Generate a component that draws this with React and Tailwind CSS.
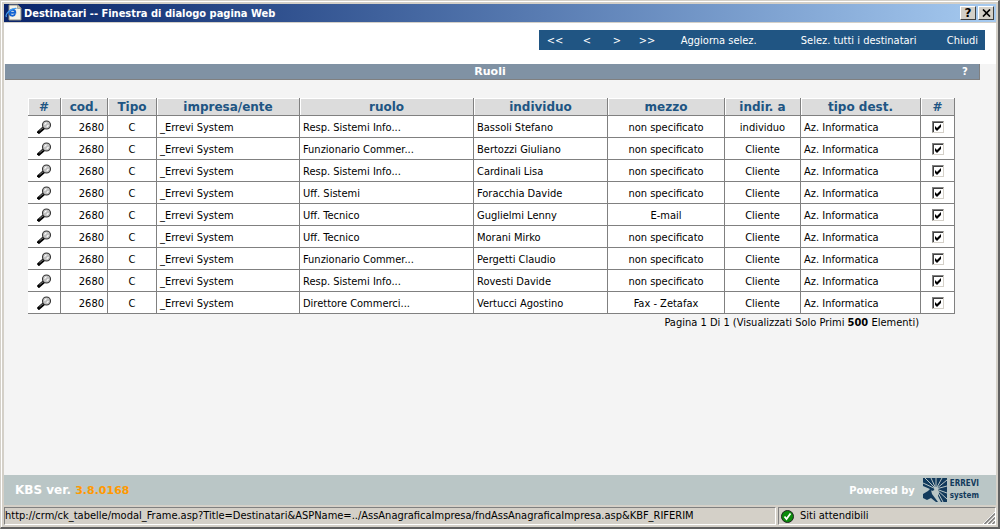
import React, { useState } from 'react';

const columns = [
  { label: '#', width: 33 },
  { label: 'cod.', width: 47 },
  { label: 'Tipo', width: 49 },
  { label: 'impresa/ente', width: 143 },
  { label: 'ruolo', width: 174 },
  { label: 'individuo', width: 134 },
  { label: 'mezzo', width: 117 },
  { label: 'indir. a', width: 76 },
  { label: 'tipo dest.', width: 120 },
  { label: '#', width: 34 },
];

const initialRows = [
  { ruolo: 'Resp. Sistemi Info...', individuo: 'Bassoli Stefano', mezzo: 'non specificato', indirizzo: 'individuo' },
  { ruolo: 'Funzionario Commer...', individuo: 'Bertozzi Giuliano', mezzo: 'non specificato', indirizzo: 'Cliente' },
  { ruolo: 'Resp. Sistemi Info...', individuo: 'Cardinali Lisa', mezzo: 'non specificato', indirizzo: 'Cliente' },
  { ruolo: 'Uff. Sistemi', individuo: 'Foracchia Davide', mezzo: 'non specificato', indirizzo: 'Cliente' },
  { ruolo: 'Uff. Tecnico', individuo: 'Guglielmi Lenny', mezzo: 'E-mail', indirizzo: 'Cliente' },
  { ruolo: 'Uff. Tecnico', individuo: 'Morani Mirko', mezzo: 'non specificato', indirizzo: 'Cliente' },
  { ruolo: 'Funzionario Commer...', individuo: 'Pergetti Claudio', mezzo: 'non specificato', indirizzo: 'Cliente' },
  { ruolo: 'Resp. Sistemi Info...', individuo: 'Rovesti Davide', mezzo: 'non specificato', indirizzo: 'Cliente' },
  { ruolo: 'Direttore Commerci...', individuo: 'Vertucci Agostino', mezzo: 'Fax - Zetafax', indirizzo: 'Cliente' },
];

function PageIcon() {
  return (
    <svg width="18" height="18" viewBox="0 0 18 18" aria-hidden="true">
      <path d="M4 1h9l3 3v12H4z" fill="#f4f2e8" stroke="#8b8b80" />
      <path d="M12.500 1v3.500H16z" fill="#c9c6ba" stroke="#8b8b80" strokeWidth=".6" />
      <path d="M5 8.700h5.300c.3-3.800-5.600-4-5.600.2 0 3.400 4.300 3.500 5.400 1.200" fill="none" stroke="#1263d2" strokeWidth="1.900" />
      <path d="M1.500 13C-.5 10 6 4 11.500 4.500" fill="none" stroke="#3f9bf0" strokeWidth="1.200" />
    </svg>
  );
}

function Magnifier() {
  return (
    <svg width="15" height="14" viewBox="0 0 15 14" aria-hidden="true">
      <path d="M2 12L6.500 8" stroke="#000" strokeWidth="3.200" strokeLinecap="square" />
      <path d="M2.500 10.800L6 7.800" stroke="#aaa" strokeWidth=".8" />
      <circle cx="9.500" cy="5" r="4" fill="#c0c0c0" stroke="#333" strokeWidth="1.100" />
      <path d="M7.500 4.700l2-2M9.800 6.800l1.700-1.700" stroke="#fff" strokeWidth="1.200" />
    </svg>
  );
}

function ErreviMark() {
  return (
    <svg width="25" height="25" viewBox="0 0 25 25" aria-hidden="true">
      <path d="M0 0h24v24H0z" fill="#123a5c" />
      <path
        d="M13 11L2 0M13 11L8 0M13 11V0M13 11L19 0M13 11L24 2M13 11L24 8M13 11l11 4M13 11l11 10M13 11l7 13M13 11L0 5"
        stroke="#bac6c6"
        strokeWidth="1"
      />
      <path d="M0 8l7 3-2 2-5 3zM9 13l5-2 2 3-1 4 3 6h-3l-3-4-3-4-1-4zM0 20l4 2 4-2 5 4H0z" fill="#bac6c6" />
      <circle cx="13" cy="11" r="2" fill="#bac6c6" />
    </svg>
  );
}

function RowCheckbox({ label, checked, onChange }) {
  return (
    <label className="mx-auto grid size-3 place-items-center">
      <input
        type="checkbox"
        aria-label={label}
        checked={checked}
        onChange={onChange}
        className="peer col-start-1 row-start-1 size-3 appearance-none border border-t-[#808080] border-r-[#d4d0c8] border-b-[#d4d0c8] border-l-[#808080] bg-white shadow-[inset_1px_1px_0_#404040]"
      />
      <svg
        width="8"
        height="8"
        viewBox="0 0 8 8"
        aria-hidden="true"
        className="pointer-events-none invisible col-start-1 row-start-1 peer-checked:visible"
      >
        <path d="M1 3l2 2 4-4v3L3 8 1 6z" fill="#000" />
      </svg>
    </label>
  );
}

function TitleButton({ label, children }) {
  return (
    <button
      aria-label={label}
      className="grid h-3.5 w-4 place-items-center border border-t-white border-r-[#404040] border-b-[#404040] border-l-white bg-[#d4d0c8] text-black"
    >
      {children}
    </button>
  );
}

function App() {
  const [selected, setSelected] = useState(initialRows.map(() => true));

  const toggleRow = (index) => {
    setSelected(selected.map((value, i) => (i === index ? !value : value)));
  };

  const cell = 'h-[22px] border-r border-b border-[#808080] bg-white px-[3px]';
  const textCell = `${cell} pt-0.5`;

  return (
    <div className="flex min-h-screen flex-col border-t border-r-2 border-b-2 border-l border-t-[#d4d0c8] border-r-[#606060] border-b-[#606060] border-l-[#d4d0c8] bg-[#d4d0c8] font-['DejaVu_Sans_Condensed','DejaVu_Sans',sans-serif] text-[11px] leading-4 text-black">
      <div className="flex grow flex-col border-t border-l border-white pt-0.5 pr-0.5 pl-0.5">
        {/* Title bar */}
        <header className="flex h-[18px] items-center bg-linear-to-r from-[#0a246a] to-[#a6caf0] pr-0.5 pl-px text-white">
          <PageIcon />
          <h1 className="grow pt-0.5 pl-px font-bold">Destinatari -- Finestra di dialogo pagina Web</h1>
          <div className="flex gap-0.5">
            <TitleButton label="Guida">
              <span className="font-['DejaVu_Sans'] text-xs leading-3 font-bold">?</span>
            </TitleButton>
            <TitleButton label="Chiudi finestra">
              <svg width="9" height="8" viewBox="0 0 9 8">
                <path d="M1 .5l7 7M8 .5l-7 7" stroke="#000" strokeWidth="1.700" />
              </svg>
            </TitleButton>
          </div>
        </header>

        {/* Toolbar */}
        <div className="mt-px flex justify-end bg-white pt-[7px] pr-[11px] pb-[14px]">
          <nav className="flex h-5 items-center bg-[#205583] pt-0.5 pr-[7px] pl-2 text-white">
            <button aria-label="Prima pagina" className="w-9 text-left">&lt;&lt;</button>
            <button aria-label="Pagina precedente" className="w-[30px] text-left">&lt;</button>
            <button aria-label="Pagina successiva" className="w-[26px] text-left">&gt;</button>
            <button aria-label="Ultima pagina" className="w-[42px] text-left">&gt;&gt;</button>
            <button className="w-[120px] text-left">Aggiorna selez.</button>
            <button className="w-[146px] text-left">Selez. tutti i destinatari</button>
            <button>Chiudi</button>
          </nav>
        </div>

        <main className="grow bg-[#f4f4f4] pb-8">
          <div className="mr-4 ml-px flex h-4 items-center border-r border-b border-[#808080] bg-[#8092a4] pt-px font-['DejaVu_Sans'] font-bold text-white">
            <h2 className="grow pl-6 text-center">Ruoli</h2>
            <button aria-label="Aiuto" className="w-7 text-center text-[10px]">?</button>
          </div>

          <div className="mt-[18px] mr-[41px] ml-6">
            <table className="w-full table-fixed border-separate border-spacing-0">
              <colgroup>
                {columns.map((column, i) => (
                  <col key={i} style={{ width: `${column.width / 9.27}%` }} />
                ))}
              </colgroup>
              <thead>
                <tr>
                  {columns.map((column, i) => (
                    <th
                      key={i}
                      className="h-[18px] border-r border-b border-[#808080] bg-[#dcdcdc] p-0 pt-px font-['DejaVu_Sans'] text-xs leading-4 font-bold text-[#205583] shadow-[inset_1px_1px_0_#ffffff]"
                    >
                      {column.label}
                    </th>
                  ))}
                </tr>
              </thead>
              <tbody>
                {initialRows.map((row, i) => (
                  <tr key={row.individuo}>
                    <td className={cell}>
                      <button aria-label={`Apri ${row.individuo}`} className="mx-auto block">
                        <Magnifier />
                      </button>
                    </td>
                    <td className={`${textCell} text-right`}>2680</td>
                    <td className={`${textCell} text-center`}>C</td>
                    <td className={textCell}>_Errevi System</td>
                    <td className={textCell}>{row.ruolo}</td>
                    <td className={textCell}>{row.individuo}</td>
                    <td className={`${textCell} text-center`}>{row.mezzo}</td>
                    <td className={`${textCell} text-center`}>{row.indirizzo}</td>
                    <td className={textCell}>Az. Informatica</td>
                    <td className={cell}>
                      <RowCheckbox
                        label={`Seleziona ${row.individuo}`}
                        checked={selected[i]}
                        onChange={() => toggleRow(i)}
                      />
                    </td>
                  </tr>
                ))}
              </tbody>
            </table>
            <p className="pt-px pr-9 text-right">
              Pagina 1 Di 1 (Visualizzati Solo Primi <b>500</b> Elementi)
            </p>
          </div>
        </main>

        {/* Version and vendor */}
        <footer className="flex h-[30px] items-center justify-between bg-[#bac6c6] pr-[17px] pl-[11px] font-bold text-white">
          <p className="font-['DejaVu_Sans'] text-xs">
            KBS ver. <span className="text-[11px] text-[#ff9900]">3.8.0168</span>
          </p>
          <div className="flex items-center">
            <span className="pt-px pr-2">Powered by</span>
            <ErreviMark />
            <span className="flex flex-col pl-0.5 text-[8px] leading-3 text-[#123a5c]">
              <span>ERREVI</span>
              <span>system</span>
            </span>
          </div>
        </footer>

        {/* Status bar */}
        <div className="flex gap-0.5 pt-0.5 pb-0.5">
          <p className="h-[18px] grow truncate border border-t-[#808080] border-r-white border-b-white border-l-[#808080]">
            http://crm/ck_tabelle/modal_Frame.asp?Title=Destinatari&amp;ASPName=../AssAnagraficaImpresa/fndAssAnagraficaImpresa.asp&amp;KBF_RIFERIM
          </p>
          <div className="flex h-[18px] w-[218px] items-center border border-t-[#808080] border-r-white border-b-white border-l-[#808080] pl-0.5">
            <svg width="13" height="13" viewBox="0 0 13 13" aria-hidden="true">
              <circle cx="6.500" cy="6.500" r="6" fill="#0b8a0b" stroke="#222" />
              <path d="M3.500 6.500l2 2.500 4-5.500" fill="none" stroke="#fff" strokeWidth="1.800" />
            </svg>
            <span className="grow pl-1.5">Siti attendibili</span>
            <svg width="12" height="12" viewBox="0 0 12 12" aria-hidden="true" className="self-end">
              <path d="M0 12L12 0M4 12l8-8M8 12l4-4" stroke="#fff" />
              <path d="M1.500 12L12 1.500M5.500 12L12 5.500M9.500 12L12 9.500" stroke="#808080" strokeWidth="1.500" />
            </svg>
          </div>
        </div>
      </div>
    </div>
  );
}

export default App;
